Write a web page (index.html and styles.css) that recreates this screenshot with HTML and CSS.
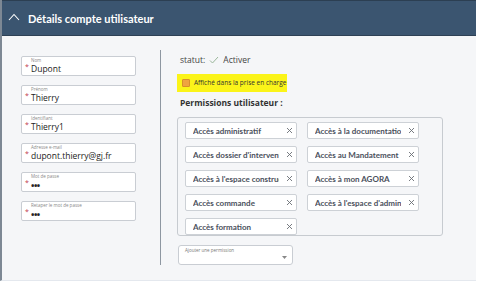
FILE: index.html
```html
<!DOCTYPE html>
<html lang="fr">
<head>
<meta charset="utf-8">
<link rel="stylesheet" href="styles.css">
</head>
<body>
<div class="panel">
  <div class="header">
    <svg class="chev" width="12" height="8" viewBox="0 0 12 8"><polyline points="1,7 6,1.5 11,7" fill="none" stroke="#ffffff" stroke-width="1.1"/></svg>
    <span class="title">Détails compte utilisateur</span>
  </div>
  <div class="content">
    <div class="left">
      <div class="field"><span class="req">*</span><span class="lbl">Nom</span><span class="val">Dupont</span></div>
      <div class="field"><span class="req">*</span><span class="lbl">Prénom</span><span class="val">Thierry</span></div>
      <div class="field"><span class="req">*</span><span class="lbl">Identifiant</span><span class="val">Thierry1</span></div>
      <div class="field"><span class="req">*</span><span class="lbl">Adresse e-mail</span><span class="val">dupont.thierry@gj.fr</span></div>
      <div class="field"><span class="req">*</span><span class="lbl">Mot de passe</span><span class="val dots">•••</span></div>
      <div class="field"><span class="req">*</span><span class="lbl">Retaper le mot de passe</span><span class="val dots">•••</span></div>
    </div>
    <div class="right">
      <div class="statut">
        <span>statut:</span>
        <svg class="check" width="10" height="8" viewBox="0 0 10 8"><polyline points="1,4.5 3.5,7 9,1" fill="none" stroke="#9bb79b" stroke-width="1"/></svg>
        <span>Activer</span>
      </div>
      <div class="hl">
        <span class="cb"></span>
        <span class="hltext">Affiché dans la prise en charge</span>
      </div>
      <div class="permtitle">Permissions utilisateur :</div>
      <div class="permbox">
        <div class="chip"><span class="ct">Accès administratif</span><svg class="x" width="7" height="7" viewBox="0 0 7 7"><path d="M1 1L6 6M6 1L1 6" stroke="#6a6e75" stroke-width="0.9"/></svg></div>
        <div class="chip"><span class="ct">Accès à la documentation</span><svg class="x" width="7" height="7" viewBox="0 0 7 7"><path d="M1 1L6 6M6 1L1 6" stroke="#6a6e75" stroke-width="0.9"/></svg></div>
        <div class="chip"><span class="ct">Accès dossier d'intervention</span><svg class="x" width="7" height="7" viewBox="0 0 7 7"><path d="M1 1L6 6M6 1L1 6" stroke="#6a6e75" stroke-width="0.9"/></svg></div>
        <div class="chip"><span class="ct">Accès au Mandatement</span><svg class="x" width="7" height="7" viewBox="0 0 7 7"><path d="M1 1L6 6M6 1L1 6" stroke="#6a6e75" stroke-width="0.9"/></svg></div>
        <div class="chip"><span class="ct">Accès à l'espace construction</span><svg class="x" width="7" height="7" viewBox="0 0 7 7"><path d="M1 1L6 6M6 1L1 6" stroke="#6a6e75" stroke-width="0.9"/></svg></div>
        <div class="chip"><span class="ct">Accès à mon AGORA</span><svg class="x" width="7" height="7" viewBox="0 0 7 7"><path d="M1 1L6 6M6 1L1 6" stroke="#6a6e75" stroke-width="0.9"/></svg></div>
        <div class="chip"><span class="ct">Accès commande</span><svg class="x" width="7" height="7" viewBox="0 0 7 7"><path d="M1 1L6 6M6 1L1 6" stroke="#6a6e75" stroke-width="0.9"/></svg></div>
        <div class="chip"><span class="ct">Accès à l'espace d'administration</span><svg class="x" width="7" height="7" viewBox="0 0 7 7"><path d="M1 1L6 6M6 1L1 6" stroke="#6a6e75" stroke-width="0.9"/></svg></div>
        <div class="chip"><span class="ct">Accès formation</span><svg class="x" width="7" height="7" viewBox="0 0 7 7"><path d="M1 1L6 6M6 1L1 6" stroke="#6a6e75" stroke-width="0.9"/></svg></div>
      </div>
      <div class="select">
        <span class="sel-lbl">Ajouter une permission</span>
        <svg class="caret" width="5" height="3" viewBox="0 0 5 3"><polygon points="0,0 5,0 2.5,3" fill="#888"/></svg>
      </div>
    </div>
  </div>
</div>
</body>
</html>
```
FILE: styles.css
```css
* { box-sizing: border-box; }
body {
  margin: 0;
  background: #ffffff;
  font-family: "Open Sans", "Noto Sans", sans-serif;
}
.panel {
  width: 476px;
  height: 281px;
  background: #f5f6f8;
  border-left: 2px solid #7d8894;
  border-bottom: 1px solid #e4e8ee;
}
.header {
  height: 36px;
  background: #3b5570;
  border-top: 1px solid #2c3f52;
  border-bottom: 1px solid #2e4155;
  display: flex;
  align-items: center;
  padding-left: 6px;
  gap: 8px;
}
.chev { display: block; margin-top: -2px; }
.title {
  color: #ffffff;
  font-family: "Lato", sans-serif;
  font-weight: 700;
  font-size: 11px;
}
.content {
  display: flex;
}
.left {
  width: 158px;
  padding: 20px 0 0 19px;
  display: flex;
  flex-direction: column;
  gap: 9px;
}
.field {
  position: relative;
  width: 115px;
  height: 20px;
  background: #ffffff;
  border: 1px solid #c9cdd3;
  border-radius: 2px;
}
.req {
  position: absolute;
  left: 3px;
  top: 5px;
  color: #c0394a;
  font-size: 7px;
}
.lbl {
  position: absolute;
  left: 9px;
  top: 0px;
  font-size: 4.5px;
  color: #888;
}
.val {
  position: absolute;
  left: 9px;
  top: 6px;
  font-size: 8.5px;
  line-height: 11px;
  color: #222;
}
.dots { font-size: 9px; font-weight: 700; letter-spacing: -0.5px; top: 7px; }
.right {
  margin-top: 14px;
  height: 215px;
  border-left: 1px solid #8e97a1;
  padding-left: 16px;
  display: flex;
  flex-direction: column;
}
.statut {
  display: flex;
  align-items: center;
  gap: 4px;
  padding-left: 3px;
  margin-top: 4px;
  height: 12px;
  font-size: 8.5px;
  color: #444;
}
.check { display: block; }
.hl {
  margin-top: 8px;
  width: 110px;
  height: 19px;
  background: #fbf419;
  display: flex;
  align-items: center;
  padding-left: 5px;
  gap: 4px;
}
.cb {
  width: 8px;
  height: 8px;
  background: #efa440;
  border: 1px solid #d88f2a;
  border-radius: 1px;
}
.hltext {
  font-size: 6.5px;
  color: #333;
  white-space: nowrap;
}
.permtitle {
  margin-top: 4px;
  padding-left: 3px;
  font-size: 8.5px;
  font-weight: 700;
  color: #333;
  height: 13px;
  line-height: 13px;
}
.permbox {
  margin-top: 8px;
  width: 266px;
  height: 122px;
  border: 1px solid #c7cbd0;
  border-radius: 3px;
  background: #f5f6f8;
  padding: 4px 0 0 7px;
  display: grid;
  grid-template-columns: 112px 112px;
  grid-auto-rows: 17px;
  column-gap: 10px;
  row-gap: 7px;
  align-content: start;
}
.chip {
  background: #ffffff;
  border: 1px solid #cdd1d6;
  border-radius: 2px;
  display: flex;
  align-items: center;
  padding-left: 7px;
  font-family: "Lato", sans-serif;
  font-size: 8px;
  font-weight: 700;
  color: #4a505c;
}
.ct {
  width: 86px;
  overflow: hidden;
  white-space: nowrap;
}
.x {
  display: block;
  margin-left: 7px;
}
.select {
  position: relative;
  margin-top: 9px;
  margin-left: 1px;
  width: 115px;
  height: 20px;
  background: #ffffff;
  border: 1px solid #c9cdd3;
  border-radius: 3px;
}
.sel-lbl {
  position: absolute;
  left: 6px;
  top: 1px;
  font-size: 4.5px;
  color: #777;
}
.caret {
  position: absolute;
  right: 5px;
  bottom: 5px;
  display: block;
}
```
